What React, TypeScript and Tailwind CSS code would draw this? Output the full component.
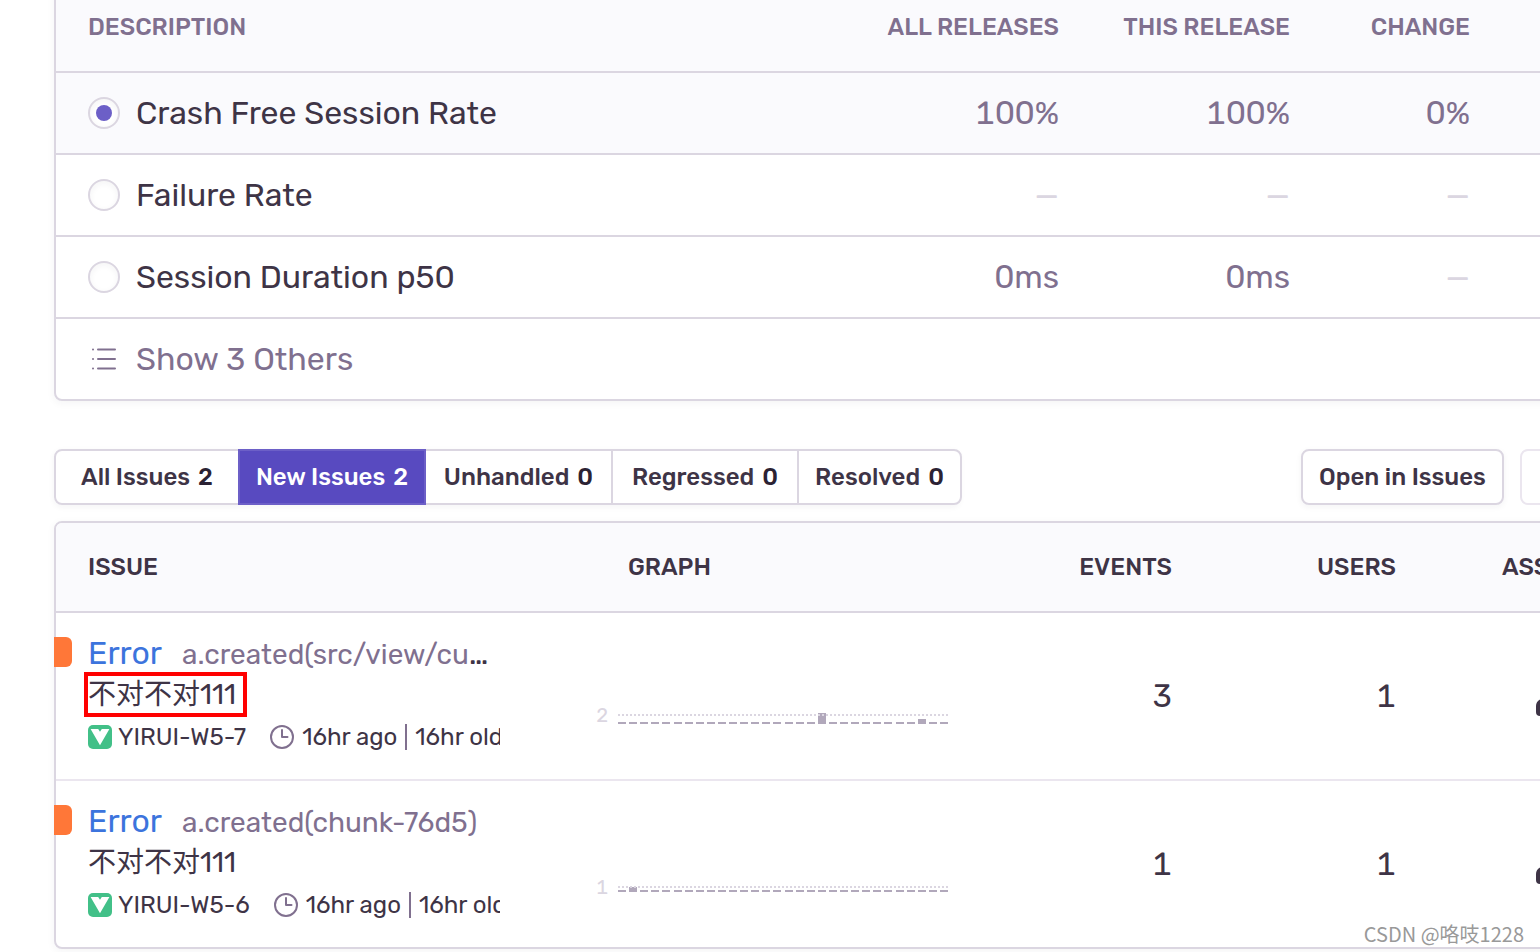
import React, { useState } from "react";

const metrics = [
  { name: "Crash Free Session Rate", all: "100%", current: "100%", change: "0%" },
  { name: "Failure Rate", all: "—", current: "—", change: "—" },
  { name: "Session Duration p50", all: "0ms", current: "0ms", change: "—" },
];

const tabs = [
  { label: "All Issues", count: 2, width: "w-[186px] rounded-l-lg" },
  { label: "New Issues", count: 2, width: "w-[188px]" },
  { label: "Unhandled", count: 0, width: "w-[189px]" },
  { label: "Regressed", count: 0, width: "w-[188px]" },
  { label: "Resolved", count: 0, width: "w-[165px] rounded-r-lg" },
];

type Issue = {
  id: string;
  culprit: string;
  truncated: boolean;
  marked: boolean;
  events: number;
  users: number;
  peak: number;
  lineY: number;
  baseline: number;
  bars: Record<number, number>;
};

const issues: Issue[] = [
  {
    id: "YIRUI-W5-7",
    culprit: "a.created(src/view/cu",
    truncated: true,
    marked: true,
    events: 3,
    users: 1,
    peak: 2,
    lineY: 21,
    baseline: 30,
    bars: { 18: 11, 27: 5 },
  },
  {
    id: "YIRUI-W5-6",
    culprit: "a.created(chunk-76d5)",
    truncated: false,
    marked: false,
    events: 1,
    users: 1,
    peak: 1,
    lineY: 25,
    baseline: 30,
    bars: { 1: 5 },
  },
];

function ListIcon() {
  return (
    <svg viewBox="0 0 32 32" className="size-8 shrink-0" stroke="currentColor" strokeWidth="2" strokeLinecap="round" fill="none" aria-hidden="true">
      <path d="M10 6.500H27M10 16H27M10 25.500H27" />
      <path d="M5 6.500h.01M5 16h.01M5 25.500h.01" />
    </svg>
  );
}

function VueIcon() {
  return (
    <svg viewBox="0 0 24 24" className="size-6 shrink-0" aria-hidden="true">
      <rect width="24" height="24" rx="5" fill="#42c088" />
      <path d="M2.600 4H10.200L12 6.800L13.800 4H21.400L12 20.200Z" fill="#fff" />
    </svg>
  );
}

function ClockIcon() {
  return (
    <svg viewBox="0 0 24 24" className="size-6 shrink-0 text-[#80708f]" stroke="currentColor" strokeWidth="2" fill="none" strokeLinecap="round" strokeLinejoin="round" aria-hidden="true">
      <circle cx="12" cy="12" r="11" />
      <path d="M12 5V12H17.500" />
    </svg>
  );
}

function UserIcon() {
  return (
    <svg viewBox="0 0 40 40" className="size-10" fill="#3e3446" aria-hidden="true">
      <circle cx="20" cy="10" r="8" />
      <path d="M8 22H32Q40 24 40 30V36Q40 40 36 40H4Q0 40 0 36V30Q0 24 8 22Z" />
    </svg>
  );
}

function Sparkline({ issue }: { issue: Issue }) {
  return (
    <svg viewBox="0 0 352 40" width="352" height="40" className="block" role="img" aria-label="Events over time">
      <text x="0" y={issue.lineY + 7} fontSize="20" fill="#dbd6e1">
        {issue.peak}
      </text>
      {Array.from({ length: 30 }, (_, i) => {
        const h = issue.bars[i] ?? 2;
        return <rect key={i} x={Math.round(22 + i * 11.1)} y={issue.baseline - h} width="8" height={h} fill="#b1a8bb" />;
      })}
      <path d={`M22 ${issue.lineY}H352`} stroke="#dbd6e1" strokeWidth="2" strokeDasharray="2 2" />
    </svg>
  );
}

const metricHead = "h-[90px] border-b-2 border-[#dbd6e1] bg-[#fafafd] px-8 text-right text-2xl font-medium text-[#80708f]";
const issueHead = "h-[90px] border-b-2 border-[#dbd6e1] bg-[#fafafd] text-2xl font-medium";

function Value({ text }: { text: string }) {
  return <span className={text === "—" ? "text-[#dbd6e1]" : "text-[#80708f] tabular-nums"}>{text}</span>;
}

export default function App() {
  const [metric, setMetric] = useState(0);
  const [tab, setTab] = useState(1);

  return (
    <main className="relative min-h-screen overflow-hidden bg-white pl-[54px] font-['Rubik','Roboto','Noto_Sans_CJK_SC',sans-serif] text-[#3e3446]">
      <section className="-mt-[19px] -mr-24 rounded-lg border-2 border-[#dbd6e1] bg-white shadow-[0_2px_8px_rgba(43,34,51,0.05)]">
        <table className="w-full table-fixed border-separate border-spacing-0 text-[32px] leading-10">
          <colgroup>
            <col />
            <col className="w-[231px]" />
            <col className="w-[180px]" />
            <col className="w-[132px]" />
          </colgroup>
          <thead>
            <tr>
              <th className={metricHead}>
                <div className="flex justify-between">
                  <span>DESCRIPTION</span>
                  <span>ALL RELEASES</span>
                </div>
              </th>
              <th className={metricHead}>THIS RELEASE</th>
              <th className={metricHead}>CHANGE</th>
              <th className={metricHead} />
            </tr>
          </thead>
          <tbody>
            {metrics.map((m, i) => {
              const cell =
                i === metric
                  ? "h-[82px] border-b-2 border-[#dbd6e1] bg-[#fafafd] px-8 text-right"
                  : "h-[82px] border-b-2 border-[#dbd6e1] px-8 text-right";
              return (
                <tr key={m.name}>
                  <td className={cell}>
                    <div className="flex items-center justify-between">
                      <label className="flex items-center gap-4">
                        <input
                          type="radio"
                          name="metric"
                          checked={i === metric}
                          onChange={() => setMetric(i)}
                          className="grid size-8 appearance-none place-items-center rounded-full border-2 border-[#dbd6e1] bg-white shadow-[inset_0_2px_6px_rgba(43,34,51,0.05)] before:size-4 before:rounded-full checked:before:bg-[#6c5fc7]"
                        />
                        {m.name}
                      </label>
                      <Value text={m.all} />
                    </div>
                  </td>
                  <td className={cell}>
                    <Value text={m.current} />
                  </td>
                  <td className={cell}>
                    <Value text={m.change} />
                  </td>
                  <td className={cell} />
                </tr>
              );
            })}
            <tr>
              <td colSpan={4} className="h-20 px-8">
                <button type="button" className="flex items-center gap-4 text-[#80708f]">
                  <ListIcon />
                  Show 3 Others
                </button>
              </td>
            </tr>
          </tbody>
        </table>
      </section>

      <nav className="mt-12 -mr-24 flex items-center justify-between text-2xl font-medium">
        <div className="flex rounded-lg shadow-[0_2px_6px_rgba(43,34,51,0.05)]">
          {tabs.map((t, i) => (
            <button
              key={t.label}
              type="button"
              aria-pressed={i === tab}
              onClick={() => setTab(i)}
              className={`${t.width} -mr-0.5 flex h-14 items-center justify-center gap-2 border-2 whitespace-nowrap ${
                i === tab ? "relative border-[#6c5fc7] bg-[#584ac0] text-white" : "border-[#dbd6e1] bg-white"
              }`}
            >
              {t.label}
              <span className={i === tab ? "" : "text-[#2b2233]"}>{t.count}</span>
            </button>
          ))}
        </div>
        <div className="flex gap-4">
          <button type="button" className="h-14 w-[203px] rounded-lg border-2 border-[#dbd6e1] bg-white whitespace-nowrap shadow-[0_2px_6px_rgba(43,34,51,0.05)]">
            Open in Issues
          </button>
          <button type="button" aria-label="Previous" className="h-14 w-[116px] rounded-lg border-2 border-[#ebe6ef] bg-white" />
        </div>
      </nav>

      <section className="mt-4 -mr-24 rounded-lg border-2 border-[#dbd6e1] bg-white shadow-[0_2px_8px_rgba(43,34,51,0.05)]">
        <table className="w-full table-fixed border-separate border-spacing-0">
          <colgroup>
            <col />
            <col className="w-[385px]" />
            <col className="w-[223px]" />
            <col className="w-[224px]" />
            <col className="w-[206px]" />
          </colgroup>
          <thead>
            <tr>
              <th className={`${issueHead} rounded-tl-md pl-8 text-left`}>ISSUE</th>
              <th className={`${issueHead} pl-8 text-left`}>GRAPH</th>
              <th className={`${issueHead} pr-8 text-right`}>EVENTS</th>
              <th className={`${issueHead} pr-8 text-right`}>USERS</th>
              <th className={`${issueHead} pl-[74px] text-left`}>ASSIGNEE</th>
            </tr>
          </thead>
          <tbody>
            {issues.map((issue, i) => {
              const rule = i < issues.length - 1 ? "h-[168px] border-b-2 border-[#ebe6ef]" : "h-[166px]";
              return (
                <tr key={issue.id} className="tabular-nums">
                  <td className={`${rule} relative pr-24 pl-8 align-top proportional-nums`}>
                    <span className="absolute top-6 -left-0.5 h-[30px] w-[18px] rounded-r-md bg-[#ff7738]" />
                    <div className="flex items-baseline gap-5 pt-[23px] leading-[34px] whitespace-nowrap">
                      <a href="#issue" className="text-[32px] text-[#3c74dd]">
                        Error
                      </a>
                      <span className="text-[28px] text-[#80708f]">
                        {issue.culprit}
                        {issue.truncated && <span className="text-[32px] text-[#3e3446]">…</span>}
                      </span>
                    </div>
                    <div className="flex text-[28px] leading-[37px]">
                      <span className={issue.marked ? "-ml-1 border-4 border-[#ff0000] pr-[7px]" : "py-1"}>不对不对111</span>
                    </div>
                    <div className="flex h-10 items-center overflow-hidden text-2xl whitespace-nowrap">
                      <VueIcon />
                      <span className="ml-1.5">{issue.id}</span>
                      <span className="ml-6 flex items-center gap-2">
                        <ClockIcon />
                        16hr ago
                        <span className="h-[26px] w-0.5 bg-[#80708f]" />
                        16hr old
                      </span>
                    </div>
                  </td>
                  <td className={rule}>
                    <div className="pt-9">
                      <Sparkline issue={issue} />
                    </div>
                  </td>
                  <td className={`${rule} pr-8 text-right text-[32px]`}>{issue.events}</td>
                  <td className={`${rule} pr-8 text-right text-[32px]`}>{issue.users}</td>
                  <td className={`${rule} pl-[108px]`}>
                    <UserIcon />
                  </td>
                </tr>
              );
            })}
          </tbody>
        </table>
      </section>

      <span className="absolute right-4 bottom-1 font-['Noto_Sans_CJK_SC',sans-serif] text-xl leading-7 text-[#999999] [text-shadow:-1px_-1px_0_#ffffff]">
        CSDN @咯吱1228
      </span>
    </main>
  );
}
